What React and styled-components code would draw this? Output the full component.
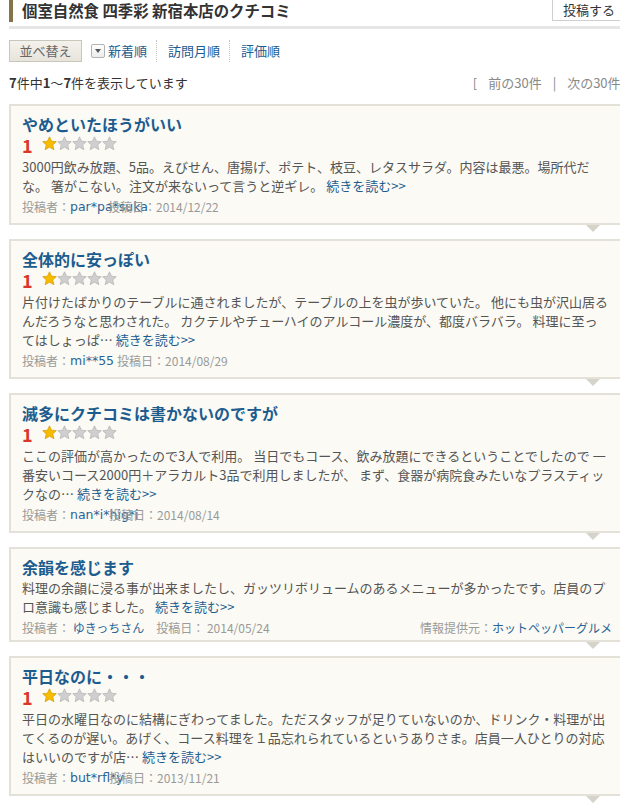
import React from "react";
import styled, { createGlobalStyle } from "styled-components";

const GlobalStyle = createGlobalStyle`
  html, body {
    margin: 0;
    padding: 0;
    background: #ffffff;
    overflow: hidden;
  }
  body {
    font-family: "Noto Sans CJK JP", "Noto Sans", sans-serif;
    color: #333333;
  }
`;

const reviews = [
  {
    title: "やめといたほうがいい",
    rating: 1,
    lines: [
      "3000円飲み放題、5品。えびせん、唐揚げ、ポテト、枝豆、レタスサラダ。内容は最悪。場所代だ",
      "な。 箸がこない。注文が来ないって言うと逆ギレ。 ",
    ],
    author: "par*pa*suka",
    authorBox: 38,
    date: "2014/12/22",
  },
  {
    title: "全体的に安っぽい",
    rating: 1,
    lines: [
      "片付けたばかりのテーブルに通されましたが、テーブルの上を虫が歩いていた。 他にも虫が沢山居る",
      "んだろうなと思わされた。 カクテルやチューハイのアルコール濃度が、都度バラバラ。 料理に至っ",
      "てはしょっぱ… ",
    ],
    author: "mi**55",
    date: "2014/08/29",
  },
  {
    title: "滅多にクチコミは書かないのですが",
    rating: 1,
    lines: [
      "ここの評価が高かったので3人で利用。 当日でもコース、飲み放題にできるということでしたので 一",
      "番安いコース2000円＋アラカルト3品で利用しましたが、 まず、食器が病院食みたいなプラスティッ",
      "クなの… ",
    ],
    author: "nan*i*hig*i",
    authorBox: 39,
    date: "2014/08/14",
  },
  {
    title: "余韻を感じます",
    lines: [
      "料理の余韻に浸る事が出来ましたし、ガッツリボリュームのあるメニューが多かったです。店員のプ",
      "ロ意識も感じました。 ",
    ],
    author: "ゆきっちさん",
    date: "2014/05/24",
    spaced: true,
    source: "ホットペッパーグルメ",
  },
  {
    title: "平日なのに・・・",
    rating: 1,
    lines: [
      "平日の水曜日なのに結構にぎわってました。ただスタッフが足りていないのか、ドリンク・料理が出",
      "てくるのが遅い。あげく、コース料理を１品忘れられているというありさま。店員一人ひとりの対応",
      "はいいのですが店… ",
    ],
    author: "but*rfl*y",
    authorBox: 39,
    date: "2013/11/21",
  },
];

function Star({ on }) {
  return (
    <svg width="15" height="15" viewBox="0 0 14 14">
      <path
        d="M7 0.8 L8.9 4.9 L13.3 5.3 L10 8.3 L11.1 12.8 L7 10.4 L2.9 12.8 L4 8.3 L0.7 5.3 L5.1 4.9 Z"
        fill={on ? "#f6bd00" : "#cfcfcf"}
        stroke={on ? "#d99a00" : "#b5b5b5"}
        strokeWidth="0.7"
        strokeLinejoin="round"
      />
    </svg>
  );
}

export default function App() {
  return (
    <Page>
      <GlobalStyle />
      <Header>
        <Title>個室自然食 四季彩 新宿本店のクチコミ</Title>
        <PostButton>投稿する</PostButton>
      </Header>

      <SortRow>
        <SortButton>並べ替え</SortButton>
        <Dropdown />
        <SortLink $first>新着順</SortLink>
        <SortLink>訪問月順</SortLink>
        <SortLink>評価順</SortLink>
      </SortRow>

      <CountRow>
        <span>
          <b>7</b>件中<b>1</b>～<b>7</b>件を表示しています
        </span>
        <Pager>
          [<PagerItem>前の30件</PagerItem>|<PagerItem>次の30件</PagerItem>]
        </Pager>
      </CountRow>

      {reviews.map((r) => (
        <Card key={r.title} $compact={!r.rating}>
          <ReviewTitle>{r.title}</ReviewTitle>
          {r.rating && (
            <RatingRow>
              <Score>{r.rating}</Score>
              <Stars>
                {[1, 2, 3, 4, 5].map((n) => (
                  <Star key={n} on={n <= r.rating} />
                ))}
              </Stars>
            </RatingRow>
          )}
          <Body $compact={!r.rating}>
            {r.lines.map((l, i) => (
              <React.Fragment key={i}>
                {l}
                {i < r.lines.length - 1 ? <br /> : <ReadMore>続きを読む&gt;&gt;</ReadMore>}
              </React.Fragment>
            ))}
          </Body>
          <Meta>
            {r.spaced ? (
              <span>
                投稿者： <Author>{r.author}</Author>　投稿日： {r.date}
              </span>
            ) : (
              <span>
                投稿者：<Author $latin $box={r.authorBox}>{r.author}</Author>投稿日：{r.date}
              </span>
            )}
            {r.source && (
              <span>
                情報提供元：<Author>{r.source}</Author>
              </span>
            )}
          </Meta>
          <Tail />
        </Card>
      ))}
    </Page>
  );
}

const Page = styled.div`
  width: 621px;
  padding-left: 9px;
`;

const Header = styled.div`
  display: flex;
  justify-content: space-between;
  align-items: flex-start;
  height: 26px;
  border-bottom: 3px solid #e6e6e6;
`;

const Title = styled.h1`
  margin: 0;
  height: 22px;
  line-height: 21px;
  padding-left: 9px;
  border-left: 4px solid #857349;
  font-size: 15.4px;
  font-weight: bold;
  color: #333;
  white-space: nowrap;
`;

const PostButton = styled.div`
  margin-top: -1px;
  height: 20px;
  line-height: 20px;
  padding: 0 14px 0 10px;
  border: 1px solid #cfcfcf;
  background: #fff;
  font-size: 13px;
  color: #333;
`;

const SortRow = styled.div`
  display: flex;
  align-items: center;
  height: 22px;
  margin-top: 11px;
  font-size: 13px;
`;

const SortButton = styled.div`
  width: 71px;
  height: 20px;
  line-height: 20px;
  text-align: center;
  border: 1px solid #c9c6bc;
  background: linear-gradient(#f4f2ec, #e7e4dc);
  color: #666;
`;

const Dropdown = styled.span`
  position: relative;
  margin-left: 9px;
  width: 12px;
  height: 12px;
  border: 1px solid #b3b3b3;
  border-radius: 2px;
  background: linear-gradient(#ffffff, #ececec);

  &::after {
    content: "";
    position: absolute;
    left: 3px;
    top: 4px;
    border-left: 3px solid transparent;
    border-right: 3px solid transparent;
    border-top: 4px solid #555;
  }
`;

const SortLink = styled.span`
  height: 22px;
  line-height: 22px;
  padding: ${(p) => (p.$first ? "0 9px 0 3px" : "0 9px 0 11px")};
  border-left: ${(p) => (p.$first ? "none" : "1px dotted #c4c4c4")};
  color: #1d5c8f;
`;

const CountRow = styled.div`
  display: flex;
  justify-content: space-between;
  margin-top: 11px;
  line-height: 20px;
  font-size: 13px;
  color: #333;

  b {
    font-weight: bold;
  }
`;

const Pager = styled.span`
  color: #888;
  white-space: nowrap;
  margin-right: -6px;
`;

const PagerItem = styled.span`
  margin: 0 11px;
  color: #888;
`;

const Card = styled.div`
  position: relative;
  margin-top: 11px;
  margin-bottom: 14px;
  padding: ${(p) => (p.$compact ? "7px 16px 2px 11px" : "7px 16px 6px 11px")};
  border: 2px solid #e4e1d8;
  background: #fbfaf4;
`;

const Tail = styled.span`
  position: absolute;
  right: 28px;
  bottom: -9px;
  border-left: 7px solid transparent;
  border-right: 7px solid transparent;
  border-top: 7px solid #d6d3cb;
`;

const ReviewTitle = styled.h2`
  margin: 0;
  height: 22px;
  font-size: 16px;
  line-height: 22px;
  font-weight: bold;
  color: #1d5c8f;
`;

const RatingRow = styled.div`
  display: flex;
  align-items: center;
  height: 20px;
`;

const Score = styled.span`
  width: 20px;
  font-size: 18px;
  font-weight: bold;
  color: #d9372b;
  line-height: 20px;
`;

const Stars = styled.span`
  display: flex;
  gap: 0;
  margin-top: -3px;
`;

const Body = styled.p`
  margin: ${(p) => (p.$compact ? "0" : "2px 0 0")};
  font-size: 13px;
  line-height: 19px;
  color: #555;
`;

const ReadMore = styled.span`
  color: #1d5c8f;
`;

const Meta = styled.div`
  display: flex;
  justify-content: space-between;
  align-items: center;
  height: 20px;
  margin-top: 2px;
  line-height: 20px;
  font-size: 12px;
  color: #9a9a9a;
  white-space: nowrap;
  overflow: visible;
`;

const Author = styled.span`
  display: inline-block;
  vertical-align: top;
  height: 20px;
  line-height: 20px;
  width: ${(p) => (p.$box ? `${p.$box}px` : "auto")};
  margin-right: ${(p) => (p.$latin && !p.$box ? "3px" : "0")};
  font-family: ${(p) => (p.$latin ? '"DejaVu Sans", sans-serif' : "inherit")};
  font-size: ${(p) => (p.$latin ? "12.5px" : "inherit")};
  color: #2a6496;
  white-space: nowrap;
  overflow: visible;
`;
